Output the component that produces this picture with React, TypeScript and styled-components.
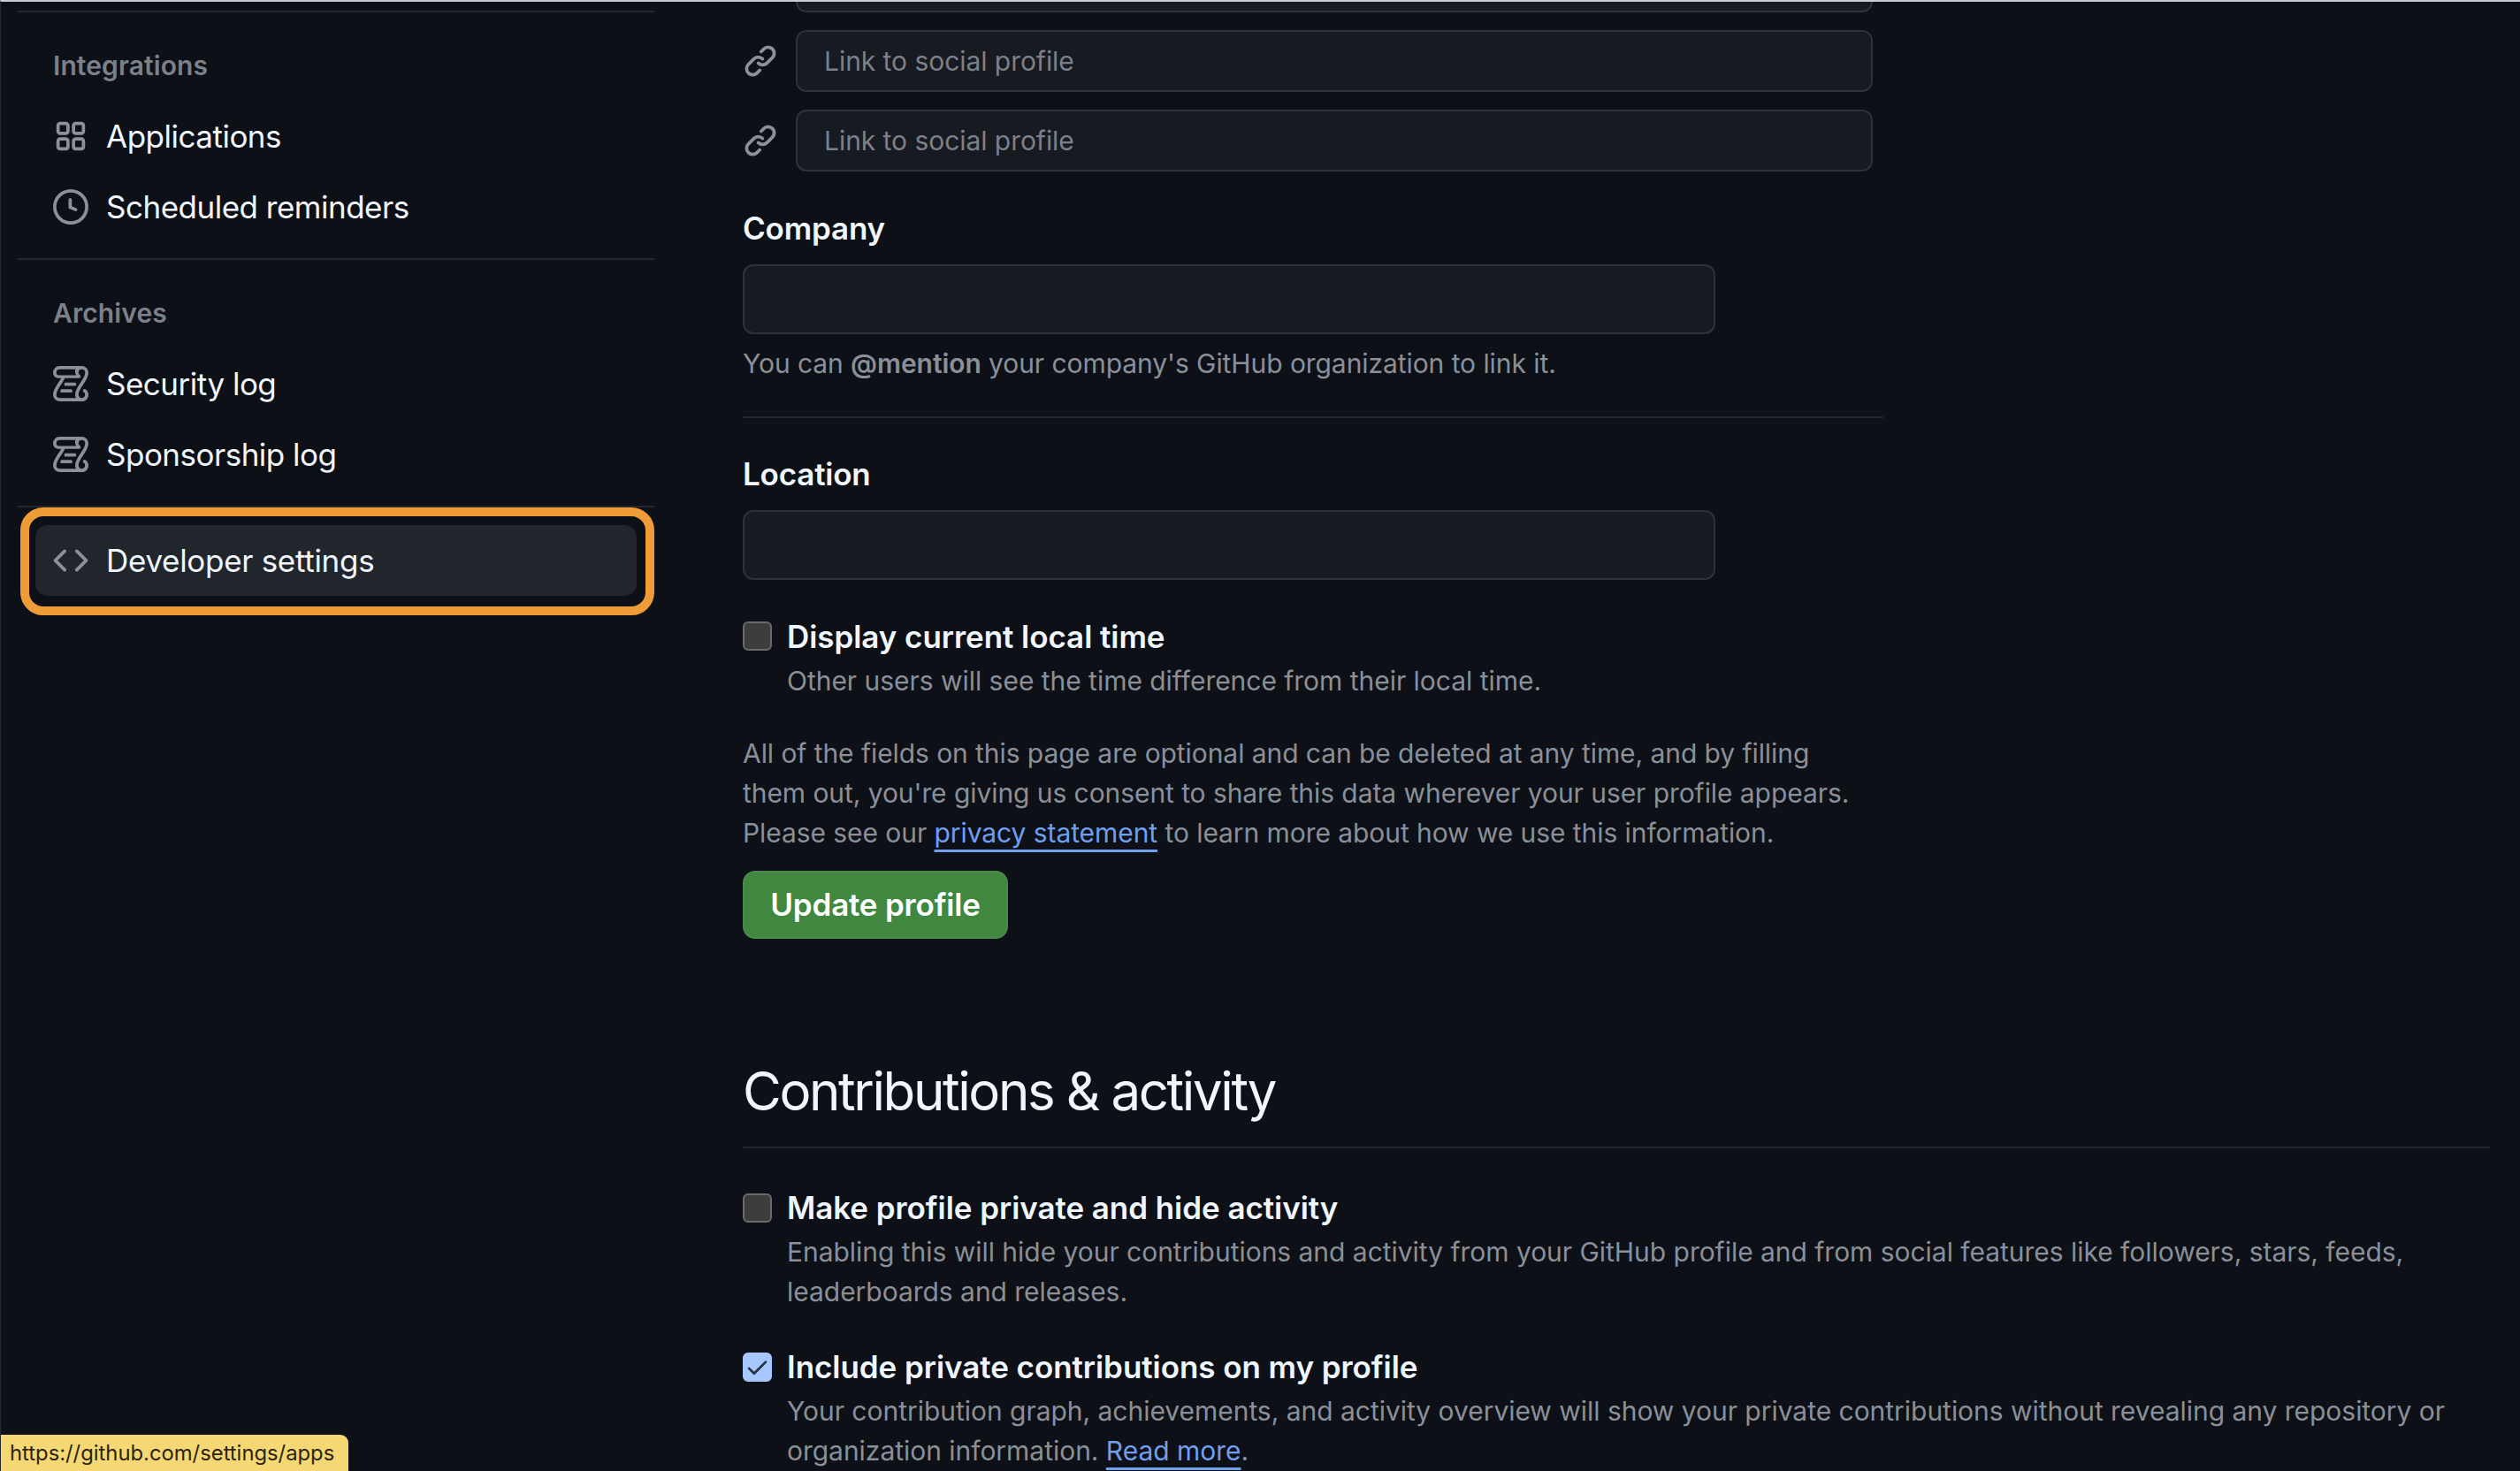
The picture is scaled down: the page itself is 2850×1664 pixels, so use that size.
import { ReactNode } from 'react'
import styled, { createGlobalStyle } from 'styled-components'

const GlobalStyle = createGlobalStyle`
    html, body {
        margin: 0;
        padding: 0;
        background: #0d1117;
    }
    * {
        box-sizing: border-box;
    }
`

const Page = styled.div`
    position: relative;
    width: 2850px;
    height: 1664px;
    display: flex;
    overflow: hidden;
    background: #0d1117;
    border-top: 2px solid #c9ccd0;
    border-left: 1px solid #23272e;
    font-family: Inter, "Liberation Sans", sans-serif;
    color: #f0f6fc;
`

const Sidebar = styled.nav`
    width: 739px;
    flex-shrink: 0;
    padding: 10px 0 0 19px;
    display: flex;
    flex-direction: column;
`

const SideDivider = styled.hr`
    border: none;
    height: 2px;
    width: 720px;
    flex-shrink: 0;
    background: #22262d;
    margin: 0;
`

const SectionHeading = styled.div`
    height: 50px;
    margin: 35px 0 15px;
    padding-left: 40px;
    display: flex;
    align-items: center;
    font-size: 30px;
    font-weight: 600;
    letter-spacing: 0.1px;
    color: #7b8089;
`

const SideList = styled.div`
    display: flex;
    flex-direction: column;
    margin-bottom: 18px;
`

const SideItem = styled.a<{ $active?: boolean }>`
    height: 80px;
    display: flex;
    align-items: center;
    gap: 20px;
    padding-left: 20px;
    width: 680px;
    border-radius: 14px;
    margin-left: 20px;
    font-size: 35px;
    letter-spacing: ${(p) => (p.$active ? '-0.3px' : '-0.5px')};
    color: #f0f6fc;
    background: ${(p) => (p.$active ? '#21262c' : 'transparent')};

    svg {
        width: 40px;
        height: 40px;
        color: #8b9099;
        flex-shrink: 0;
    }
`

const Highlight = styled.div`
    width: 717px;
    height: 122px;
    margin: 0 0 0 3px;
    border: 10px solid #ee9b38;
    border-radius: 26px;
    padding: 10px 0 0 7px;
    flex-shrink: 0;

    ${SideItem} {
        margin-left: 0;
    }
`

const Main = styled.main`
    flex: 1;
    min-width: 0;
    padding: 0 34px 0 100px;
    display: flex;
    flex-direction: column;
`

const SocialRow = styled.div<{ $clipped?: boolean }>`
    display: flex;
    align-items: center;
    gap: 20px;
    height: 70px;
    width: 1278px;
    margin-top: ${(p) => (p.$clipped ? '-58px' : '20px')};
    flex-shrink: 0;

    svg {
        width: 40px;
        height: 40px;
        color: #8b9099;
        flex-shrink: 0;
    }
`

const TextBox = styled.div`
    flex: 1;
    height: 100%;
    display: flex;
    align-items: center;
    padding: 0 30px;
    background: #161a21;
    border: 2px solid #2d3138;
    border-radius: 12px;
    font-size: 30px;
    letter-spacing: -0.05px;
    color: #7b8089;
`

const FieldBlock = styled.div<{ $top?: number }>`
    display: flex;
    flex-direction: column;
    margin-top: ${(p) => p.$top ?? 0}px;
`

const FieldLabel = styled.label<{ $check?: boolean }>`
    font-size: 35px;
    font-weight: 600;
    letter-spacing: ${(p) => (p.$check ? '-0.06px' : '-0.2px')};
    line-height: 50px;
    color: #f0f6fc;
`

const WideBox = styled(TextBox)`
    flex: none;
    width: 1100px;
    height: 79px;
    margin-top: 16px;
`

const Hint = styled.p`
    margin: 15px 0 1px;
    font-size: 30px;
    line-height: 36px;
    letter-spacing: -0.07px;
    color: #8a8f98;

    strong {
        font-weight: 600;
    }
`

const FormDivider = styled.hr`
    border: none;
    height: 2px;
    width: 1290px;
    background: #22262d;
    margin: 41px 0 38px;
`

const CheckRow = styled.div<{ $top: number }>`
    display: grid;
    grid-template-columns: 33px 1fr;
    column-gap: 17px;
    align-items: center;
    margin-top: ${(p) => p.$top}px;
`

const CheckBox = styled.span<{ $checked?: boolean }>`
    width: 33px;
    height: 33px;
    border-radius: 6px;
    display: flex;
    align-items: center;
    justify-content: center;
    background: ${(p) => (p.$checked ? '#a6c8ff' : '#3d3d3d')};
    border: 2px solid ${(p) => (p.$checked ? '#a6c8ff' : '#6a6a6a')};
    color: #27303f;

    svg {
        width: 29px;
        height: 29px;
    }
`

const CheckNote = styled.p`
    grid-column: 2;
    margin: 3px 0 0;
    font-size: 30px;
    line-height: 45px;
    letter-spacing: -0.03px;
    color: #8a8f98;
`

const Paragraph = styled.p`
    margin: 37px 0 0;
    width: 1290px;
    font-size: 30px;
    line-height: 45px;
    letter-spacing: -0.07px;
    color: #8a8f98;
`

const TextLink = styled.a`
    color: #6f9ff0;
    text-decoration: underline;
    text-decoration-thickness: 2.5px;
    text-underline-offset: 8px;
`

const SaveButton = styled.button`
    width: 300px;
    height: 80px;
    margin-top: 20px;
    padding: 0;
    border: 2px solid #4a8a4a;
    border-radius: 14px;
    background: #408740;
    color: #fff;
    font-family: inherit;
    font-size: 35px;
    font-weight: 600;
    letter-spacing: -0.2px;
`

const SectionTitle = styled.h2`
    margin: 136px 0 0;
    font-size: 60px;
    line-height: 72px;
    font-weight: 400;
    letter-spacing: -2.4px;
    color: #f0f6fc;
    padding-bottom: 27px;
    border-bottom: 2px solid #22262d;
`

const StatusTip = styled.div`
    position: absolute;
    left: -1px;
    bottom: 0;
    width: 394px;
    height: 41px;
    display: flex;
    align-items: center;
    padding-left: 11px;
    background: #f5d873;
    border-top-right-radius: 9px;
    font-size: 23.8px;
    color: #2b2510;
`

const Octicon = ({ d }: { d: string }) => (
    <svg viewBox="0 0 16 16" fill="currentColor">
        <path d={d} />
    </svg>
)

const clockPath =
    'M8 0a8 8 0 1 1 0 16A8 8 0 0 1 8 0ZM1.5 8a6.5 6.5 0 1 0 13 0 6.5 6.5 0 0 0-13 0Zm7-3.25v2.992l2.028.812a.75.75 0 0 1-.557 1.392l-2.5-1A.751.751 0 0 1 7 8.25v-3.5a.75.75 0 0 1 1.5 0Z'
const linkPath =
    'm7.775 3.275 1.25-1.25a3.5 3.5 0 1 1 4.95 4.95l-2.5 2.5a3.5 3.5 0 0 1-4.95 0 .751.751 0 0 1 .018-1.042.751.751 0 0 1 1.042-.018 1.998 1.998 0 0 0 2.83 0l2.5-2.5a2.002 2.002 0 0 0-2.83-2.83l-1.25 1.25a.751.751 0 0 1-1.042-.018.751.751 0 0 1-.018-1.042Zm-4.69 9.64a1.998 1.998 0 0 0 2.83 0l1.25-1.25a.751.751 0 0 1 1.042.018.751.751 0 0 1 .018 1.042l-1.25 1.25a3.5 3.5 0 1 1-4.95-4.95l2.5-2.5a3.5 3.5 0 0 1 4.95 0 .751.751 0 0 1-.018 1.042.751.751 0 0 1-1.042.018 1.998 1.998 0 0 0-2.83 0l-2.5 2.5a1.998 1.998 0 0 0 0 2.83Z'
const codePath =
    'm11.28 3.22 4.25 4.25a.75.75 0 0 1 0 1.06l-4.25 4.25a.749.749 0 0 1-1.275-.326.749.749 0 0 1 .215-.734L13.94 8l-3.72-3.72a.749.749 0 0 1 .326-1.275.749.749 0 0 1 .734.215Zm-6.56 0a.751.751 0 0 1 1.042.018.751.751 0 0 1 .018 1.042L2.06 8l3.72 3.72a.749.749 0 0 1-.326 1.275.749.749 0 0 1-.734-.215L.47 8.53a.75.75 0 0 1 0-1.06Z'
const checkPath =
    'M13.78 4.22a.75.75 0 0 1 0 1.06l-7.25 7.25a.75.75 0 0 1-1.06 0L2.22 9.28a.751.751 0 0 1 .018-1.042.751.751 0 0 1 1.042-.018L6 10.94l6.72-6.72a.75.75 0 0 1 1.06 0Z'
const logPath =
    'M5 8.25a.75.75 0 0 1 .75-.75h4a.75.75 0 0 1 0 1.5h-4A.75.75 0 0 1 5 8.25ZM4 10.5A.75.75 0 0 0 4 12h4a.75.75 0 0 0 0-1.5H4Z M13-.005c1.654 0 3 1.328 3 3 0 .982-.338 1.933-.783 2.818-.443.879-1.028 1.758-1.582 2.588l-.011.017c-.568.853-1.104 1.659-1.501 2.446-.398.789-.623 1.494-.623 2.136a1.5 1.5 0 1 0 2.333-1.248.75.75 0 0 1 .834-1.246A3 3 0 0 1 13 16H3a3 3 0 0 1-3-3c0-1.582.891-3.135 1.777-4.506.209-.322.418-.637.623-.946.473-.709.923-1.386 1.287-2.048H2.51c-.576 0-1.381-.133-1.907-.783A2.68 2.68 0 0 1 0 2.995a3 3 0 0 1 3-3Zm0 1.5a1.5 1.5 0 0 0-1.5 1.5c0 .476.223.834.667 1.132A.75.75 0 0 1 11.75 5.5H5.368c-.467 1.003-1.141 2.015-1.773 2.963-.192.289-.381.571-.558.845C2.13 10.711 1.5 11.916 1.5 13A1.5 1.5 0 0 0 3 14.5h7.401A2.989 2.989 0 0 1 10 13c0-.979.338-1.928.784-2.812.441-.874 1.023-1.748 1.575-2.576l.017-.026c.568-.853 1.103-1.658 1.501-2.448.398-.79.623-1.498.623-2.143a1.5 1.5 0 0 0-1.5-1.5Zm-3.04 0H3a1.5 1.5 0 0 0-1.5 1.5c0 .326.087.715.27.941.087.108.292.224.74.224h7.945a2.985 2.985 0 0 1-.495-1.665c0-.541.145-1.065.4-1.5Z'

const AppsIcon = () => (
    <svg viewBox="0 0 16 16" fill="none" stroke="currentColor" strokeWidth="1.5">
        <rect x="2.25" y="2.25" width="4.5" height="4.5" rx="1" />
        <rect x="9.25" y="2.25" width="4.5" height="4.5" rx="1" />
        <rect x="2.25" y="9.25" width="4.5" height="4.5" rx="1" />
        <rect x="9.25" y="9.25" width="4.5" height="4.5" rx="1" />
    </svg>
)

type NavEntry = { icon: ReactNode; label: string }

const integrations: NavEntry[] = [
    { icon: <AppsIcon />, label: 'Applications' },
    { icon: <Octicon d={clockPath} />, label: 'Scheduled reminders' },
]

const archives: NavEntry[] = [
    { icon: <Octicon d={logPath} />, label: 'Security log' },
    { icon: <Octicon d={logPath} />, label: 'Sponsorship log' },
]

const App = () => (
    <Page>
        <GlobalStyle />
        <Sidebar>
            <SideDivider />
            <SectionHeading>Integrations</SectionHeading>
            <SideList>
                {integrations.map((item) => (
                    <SideItem key={item.label}>
                        {item.icon}
                        <span>{item.label}</span>
                    </SideItem>
                ))}
            </SideList>
            <SideDivider />
            <SectionHeading>Archives</SectionHeading>
            <SideList>
                {archives.map((item) => (
                    <SideItem key={item.label}>
                        {item.icon}
                        <span>{item.label}</span>
                    </SideItem>
                ))}
            </SideList>
            <SideDivider />
            <Highlight>
                <SideItem $active>
                    <Octicon d={codePath} />
                    <span>Developer settings</span>
                </SideItem>
            </Highlight>
        </Sidebar>

        <Main>
            <SocialRow $clipped>
                <Octicon d={linkPath} />
                <TextBox />
            </SocialRow>
            <SocialRow>
                <Octicon d={linkPath} />
                <TextBox>Link to social profile</TextBox>
            </SocialRow>
            <SocialRow>
                <Octicon d={linkPath} />
                <TextBox>Link to social profile</TextBox>
            </SocialRow>

            <FieldBlock $top={39}>
                <FieldLabel>Company</FieldLabel>
                <WideBox />
                <Hint>
                    You can <strong>@mention</strong> your company's GitHub organization to link it.
                </Hint>
            </FieldBlock>

            <FormDivider />

            <FieldBlock>
                <FieldLabel>Location</FieldLabel>
                <WideBox />
            </FieldBlock>

            <CheckRow $top={39}>
                <CheckBox />
                <FieldLabel $check>Display current local time</FieldLabel>
                <CheckNote>Other users will see the time difference from their local time.</CheckNote>
            </CheckRow>

            <Paragraph>
                All of the fields on this page are optional and can be deleted at any time, and by filling
                <br />
                them out, you're giving us consent to share this data wherever your user profile appears.
                <br />
                Please see our <TextLink>privacy statement</TextLink> to learn more about how we use this information.
            </Paragraph>

            <SaveButton>Update profile</SaveButton>

            <SectionTitle>Contributions &amp; activity</SectionTitle>

            <CheckRow $top={42}>
                <CheckBox />
                <FieldLabel $check>Make profile private and hide activity</FieldLabel>
                <CheckNote>
                    Enabling this will hide your contributions and activity from your GitHub profile and from social features like followers, stars, feeds,
                    <br />
                    leaderboards and releases.
                </CheckNote>
            </CheckRow>

            <CheckRow $top={37}>
                <CheckBox $checked>
                    <Octicon d={checkPath} />
                </CheckBox>
                <FieldLabel $check>Include private contributions on my profile</FieldLabel>
                <CheckNote>
                    Your contribution graph, achievements, and activity overview will show your private contributions without revealing any repository or
                    <br />
                    organization information. <TextLink>Read more</TextLink>.
                </CheckNote>
            </CheckRow>
        </Main>

        <StatusTip>https://github.com/settings/apps</StatusTip>
    </Page>
)

export default App
